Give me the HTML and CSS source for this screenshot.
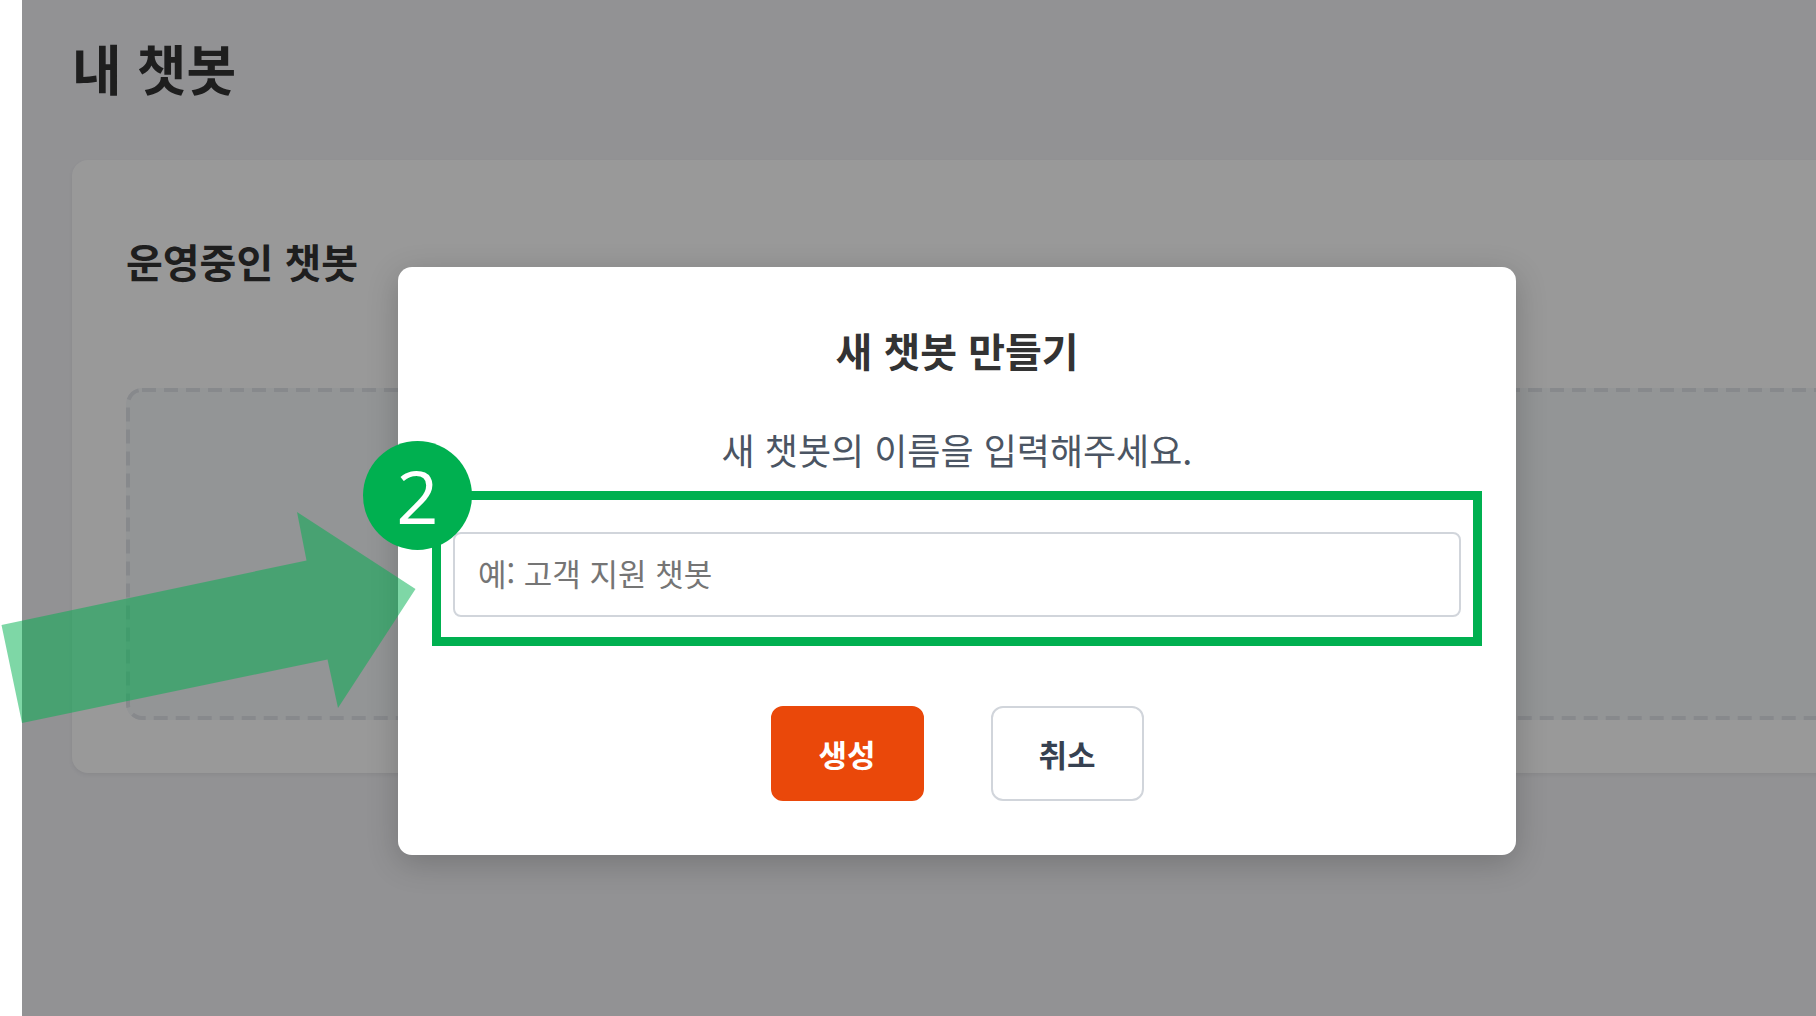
FILE: index.html
```html
<!DOCTYPE html>
<html lang="ko">
<head>
    <meta charset="UTF-8">
    <meta name="viewport" content="width=device-width, initial-scale=1.0">
    <title>내 챗봇</title>
    <link rel="stylesheet" href="styles.css">
</head>
<body>
    <div class="app">
        <main class="page">
            <h1>내 챗봇</h1>
            <section class="card">
                <h2>운영중인 챗봇</h2>
                <div class="empty-state">
                    <svg class="empty-outline" aria-hidden="true">
                        <rect width="100%" height="100%" rx="14"/>
                    </svg>
                </div>
            </section>
        </main>

        <div class="overlay">
            <form class="modal" role="dialog" aria-labelledby="modalTitle">
                <h2 class="modal-title" id="modalTitle">새 챗봇 만들기</h2>
                <label class="modal-label" for="botName">새 챗봇의 이름을 입력해주세요.</label>
                <div class="highlight">
                    <span class="step-badge">2</span>
                    <input type="text" id="botName" placeholder="예: 고객 지원 챗봇">
                </div>
                <div class="modal-actions">
                    <button type="submit" class="btn btn-primary">생성</button>
                    <button type="button" class="btn btn-secondary">취소</button>
                </div>
            </form>
        </div>
    </div>

    <!-- Arrow pointing at the name field -->
    <svg class="arrow" width="416" height="212" viewBox="0 0 416 212" aria-hidden="true">
        <path d="M1.5 113 L306.5 48.5 L297 0 L415.5 77 L338 196 L327.5 147.5 L22 211 Z"/>
    </svg>
</body>
</html>
```
FILE: styles.css
```css
* {
    box-sizing: border-box;
}
body {
    margin: 0;
    padding-left: 22px;
    position: relative;
    background-color: white;
    color: #333;
    font-family: 'Noto Sans CJK KR', sans-serif;
}
h1, h2 {
    margin: 0;
    font-weight: 700;
}
.app {
    position: relative;
    min-height: 100vh;
    background-color: #f3f3f7;
    overflow: hidden;
}
.page {
    padding: 28px 0 0 50px;
}
h1 {
    font-size: 54px;
    line-height: 80px;
}
.card {
    margin-top: 52px;
    margin-right: -20px;
    padding: 71px 0 53px 54px;
    background-color: white;
    border-radius: 16px;
    box-shadow: 0 2px 4px rgba(0, 0, 0, 0.06);
}
.card h2 {
    font-size: 40px;
    line-height: 60px;
}
.empty-state {
    height: 332px;
    margin-top: 97px;
    padding: 2px;
    background-color: #f6f8fb;
    border-radius: 16px;
}
.empty-outline {
    display: block;
    width: 100%;
    height: 100%;
    overflow: visible;
}
.empty-outline rect {
    fill: none;
    stroke: #e2e4e9;
    stroke-width: 4px;
    stroke-dasharray: 14 8;
}
.overlay {
    position: absolute;
    inset: 0;
    padding: 267px 300px 0 376px;
    background-color: rgba(0, 0, 0, 0.4);
}
.modal {
    display: flex;
    flex-direction: column;
    padding: 53px 34px 54px;
    background-color: white;
    border-radius: 14px;
    box-shadow: 0 8px 32px rgba(0, 0, 0, 0.2);
    text-align: center;
}
.modal-title {
    font-size: 40px;
    line-height: 60px;
}
.modal-label {
    margin-top: 42px;
    color: #4b5563;
    font-size: 36px;
    line-height: 54px;
}
.highlight {
    position: relative;
    margin-top: 15px;
    padding: 32px 12px 20px;
    border: 9px solid #00b050;
}
.highlight input {
    display: block;
    width: 100%;
    height: 85px;
    padding: 0 23px 4px;
    border: 2px solid #d1d5db;
    border-radius: 8px;
    background-color: white;
    font-family: inherit;
    font-size: 31px;
}
.highlight input::placeholder {
    color: #757575;
}
.step-badge {
    position: absolute;
    top: -59px;
    left: -78px;
    width: 109px;
    height: 109px;
    border-radius: 50%;
    background-color: #00b050;
    color: white;
    font-family: 'Open Sans', sans-serif;
    font-size: 74px;
    font-weight: 500;
    line-height: 109px;
}
.modal-actions {
    display: flex;
    justify-content: center;
    gap: 67px;
    margin-top: 60px;
}
.btn {
    width: 153px;
    height: 95px;
    padding: 0;
    border: 2px solid #d1d5db;
    border-radius: 12px;
    font-family: inherit;
    font-size: 31px;
    font-weight: 700;
    cursor: pointer;
}
.btn-primary {
    background-color: #ea480a;
    border-color: #ea480a;
    color: white;
}
.btn-secondary {
    background-color: white;
    color: #374151;
}
.arrow {
    position: absolute;
    top: 512px;
    left: 0;
    fill: #00b050;
    opacity: 0.5;
    pointer-events: none;
}
```
